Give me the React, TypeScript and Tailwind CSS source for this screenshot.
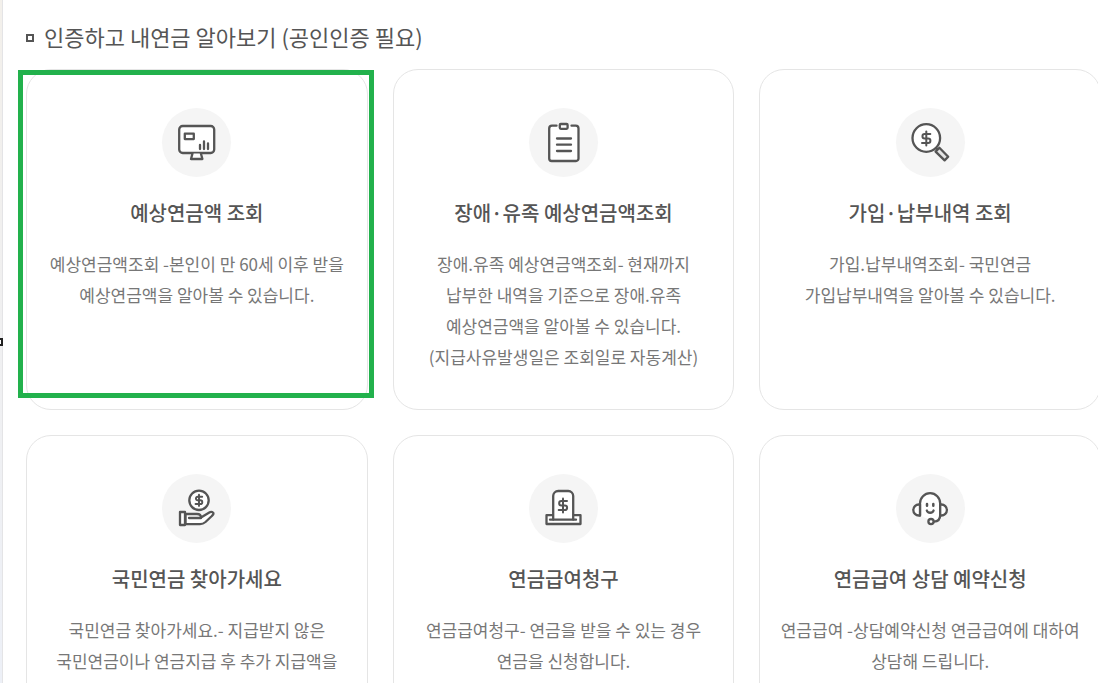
import type { ReactNode } from "react";

interface Service {
  title: string;
  lines: string[];
  icon: ReactNode;
  selected?: boolean;
}

function Dollar({ x, y, small }: { x: number; y: number; small?: boolean }) {
  return (
    <g transform={`translate(${x} ${y}) scale(${small ? 0.8 : 1})`} strokeWidth={small ? 2.4 : 2}>
      <path d="M4 -4.5H-1.6a2.2 2.2 0 0 0 0 4.5H1.8a2.3 2.3 0 0 1 0 4.6H-4.3" />
      <path d="M0 -7V7" />
    </g>
  );
}

const monitorIcon = (
  <>
    <rect x="17.2" y="18" width="35" height="27" rx="3.5" fill="#fff" />
    <rect x="22.8" y="25.7" width="9" height="5.4" fill="#fff" />
    <path d="M38 37v4M42 33.5V41M46 35.5V41" />
    <path d="M30.5 45.5 29 51h11.4l-1.5-5.5" fill="#fff" />
  </>
);

const clipboardIcon = (
  <>
    <path
      d="M27.5 17.7H23a2.8 2.8 0 0 0-2.8 2.8v30a2.5 2.5 0 0 0 2.5 2.5H47a2.5 2.5 0 0 0 2.5-2.5v-30a2.8 2.8 0 0 0-2.8-2.8h-4.2"
      fill="#fff"
    />
    <rect x="30.8" y="16" width="7.8" height="4.8" rx="1" fill="#fff" />
    <path d="M28 30.5h14M28 36.7h14M28 43h14" />
  </>
);

const searchIcon = (
  <>
    <circle cx="30.3" cy="30" r="13.8" fill="#fff" />
    <Dollar x={30.3} y={30.4} />
    <path d="m40 40 3 3" />
    <path d="m39.6 43.6 3.8-3.8 8.8 9-3.6 3.6z" fill="#e4e4e4" />
  </>
);

const handIcon = (
  <>
    <circle cx="37" cy="26.3" r="9.7" fill="#fff" />
    <Dollar x={37} y={26.3} small />
    <path
      d="M23.5 40H35c3 0 4 1.2 4 3.6l8.3-5.1c2-1.2 4.5-.3 4.2 1.3-.2 1-1.2 1.7-2.2 2.7l-5.8 5.5c-1.8 1.6-3 2.2-5.5 2.200H23.5z"
      fill="#fff"
    />
    <path d="M27 44h12" />
    <rect x="18" y="38" width="5" height="13" fill="#fff" />
  </>
);

const claimIcon = (
  <>
    <path d="M24 41.200h-6.500V50h34v-8.800H45" fill="#fff" />
    <path d="M24.200 45.500V22a5 5 0 0 1 5-5h10a5 5 0 0 1 5 5v23.500" fill="#fff" />
    <path d="M21 45.700h26" />
    <Dollar x={34} y={31.5} />
  </>
);

const headsetIcon = (
  <>
    <path d="M24 41.500v-12a10 10.200 0 0 1 20.200 0V41c0 4-2.200 6.500-6.200 6.600" fill="#fff" />
    <path
      d="M24 30.500h-1.200a5.500 5.500 0 0 0 0 11H24zM44.200 30.500h1.200a5.500 5.500 0 0 1 0 11h-1.200z"
      fill="#fff"
    />
    <path d="M31 30v1.800M37.300 30v1.800" strokeWidth="2.500" />
    <path d="M30.800 36.500c.8 3 6 3 6.800 0" />
    <circle cx="35" cy="47.600" r="2.600" fill="#fff" />
  </>
);

const services: Service[] = [
  {
    title: "예상연금액 조회",
    lines: ["예상연금액조회 -본인이 만 60세 이후 받을", "예상연금액을 알아볼 수 있습니다."],
    icon: monitorIcon,
    selected: true,
  },
  {
    title: "장애·유족 예상연금액조회",
    lines: [
      "장애.유족 예상연금액조회- 현재까지",
      "납부한 내역을 기준으로 장애.유족",
      "예상연금액을 알아볼 수 있습니다.",
      "(지급사유발생일은 조회일로 자동계산)",
    ],
    icon: clipboardIcon,
  },
  {
    title: "가입·납부내역 조회",
    lines: ["가입.납부내역조회- 국민연금", "가입납부내역을 알아볼 수 있습니다."],
    icon: searchIcon,
  },
  {
    title: "국민연금 찾아가세요",
    lines: ["국민연금 찾아가세요.- 지급받지 않은", "국민연금이나 연금지급 후 추가 지급액을"],
    icon: handIcon,
  },
  {
    title: "연금급여청구",
    lines: ["연금급여청구- 연금을 받을 수 있는 경우", "연금을 신청합니다."],
    icon: claimIcon,
  },
  {
    title: "연금급여 상담 예약신청",
    lines: ["연금급여 -상담예약신청 연금급여에 대하여", "상담해 드립니다."],
    icon: headsetIcon,
  },
];

function ServiceCard({ title, lines, icon, selected }: Service) {
  return (
    <li className="relative">
      <a
        href="#"
        className="flex h-full flex-col items-center rounded-[25px] border border-[#e5e5e5] bg-white pt-[38px] text-center"
      >
        <span className="flex size-[69px] items-center justify-center rounded-full bg-[#f5f5f5]">
          <svg
            viewBox="0 0 69 69"
            className="size-full"
            fill="none"
            stroke="#555"
            strokeWidth="2.3"
            strokeLinecap="round"
            strokeLinejoin="round"
            aria-hidden="true"
          >
            {icon}
          </svg>
        </span>
        <strong className="mt-5 text-[20px] leading-8 font-medium text-[#555]">{title}</strong>
        <span className="mt-[19px] text-[17px] leading-[31px] text-[#777]">
          {lines.map((line) => (
            <span key={line} className="block whitespace-nowrap">
              {line}
            </span>
          ))}
        </span>
      </a>
      {selected && (
        <span className="pointer-events-none absolute top-px -right-1.5 bottom-3 -left-2 border-5 border-[#22b14c]" />
      )}
    </li>
  );
}

export default function App() {
  return (
    <div className="relative flex h-screen overflow-hidden bg-white font-['Noto_Sans_CJK_KR','Noto_Sans',sans-serif]">
      <div className="w-[3px] shrink-0 border-r border-[#e4e4e6] bg-linear-to-b from-[#f3f0eb] to-[#edf0f7]" />
      <span className="absolute top-[338px] -left-[5px] size-2 border-2 border-[#222] bg-white" />
      <main className="-mr-[3px] flex-1 pt-5 pl-[23px]">
        <h2 className="flex items-center gap-2.5 text-[22px] leading-8 text-[#555]">
          <span className="mt-1 size-2 border-2 border-[#555]" />
          인증하고 내연금 알아보기 (공인인증 필요)
        </h2>
        <ul className="mt-[17px] grid auto-rows-[341px] grid-cols-3 gap-[25px]">
          {services.map((service) => (
            <ServiceCard key={service.title} {...service} />
          ))}
        </ul>
      </main>
    </div>
  );
}
